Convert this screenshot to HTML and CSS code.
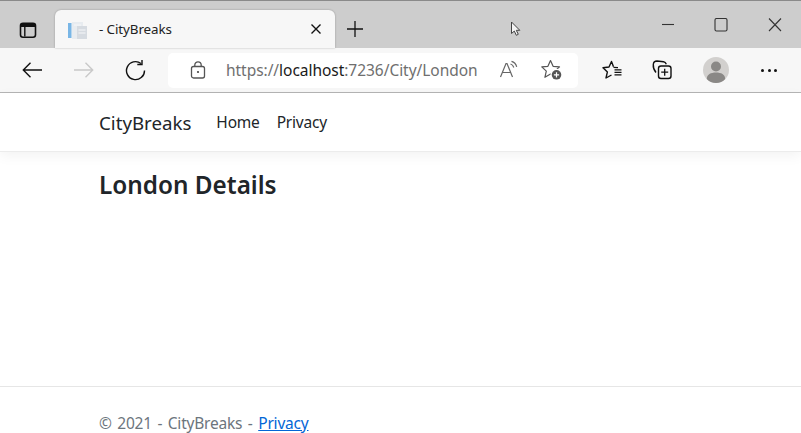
FILE: index.html
```html
<!DOCTYPE html>
<html lang="en">
<head>
<meta charset="utf-8">
<title>- CityBreaks</title>
<link rel="stylesheet" href="styles.css">
</head>
<body>
<header class="chrome">
  <div class="tabstrip">
    <svg class="ic-tabs" width="18" height="18" viewBox="0 0 18 18"><rect x="1.500" y="2.200" width="15" height="14" rx="2.500" fill="none" stroke="#111" stroke-width="1.600"/><path d="M2 3h14v3H2z" fill="#111"/><path d="M5.800 5.500v10" stroke="#111" stroke-width="1.400"/></svg>
    <div class="tab">
      <svg class="favicon" width="20" height="19" viewBox="0 0 20 19"><rect x="0" y="2" width="3.500" height="15" fill="#79b6e6"/><rect x="4" y="1" width="11" height="17" fill="#e8ecf0"/><rect x="9" y="5" width="10" height="13" fill="#d6dbe1"/><path d="M6 4h7M10.500 9h7M10.500 12h7" stroke="#f6f7f9" stroke-width="1"/></svg>
      <span class="tab-title">- CityBreaks</span>
      <svg class="tab-close" width="12" height="12" viewBox="0 0 12 12"><path d="M1.500 1.500l9 9M10.500 1.500l-9 9" stroke="#111" stroke-width="1.400" fill="none"/></svg>
    </div>
    <svg class="ic-new" width="18" height="18" viewBox="0 0 18 18"><path d="M9 1v16M1 9h16" stroke="#111" stroke-width="1.300" fill="none"/></svg>
    <svg class="cursor" width="12" height="16" viewBox="0 0 12 16"><path d="M1.500 1v11.500l2.800-2.400 2 4.200 2-1-2-4h3.500z" fill="#f4f4f4" stroke="#444" stroke-width="1"/></svg>
    <svg class="win win-min" width="14" height="14" viewBox="0 0 14 14"><path d="M1 6.500h12" stroke="#333" stroke-width="1.100"/></svg>
    <svg class="win win-max" width="14" height="14" viewBox="0 0 14 14"><rect x="1" y="0.500" width="12" height="12.500" rx="1.500" fill="none" stroke="#333" stroke-width="1.100"/></svg>
    <svg class="win win-close" width="14" height="14" viewBox="0 0 14 14"><path d="M1 0.500l12 12.500M13 0.500L1 13" stroke="#333" stroke-width="1.100"/></svg>
  </div>
  <div class="toolbar">
    <svg class="tb-back" width="21" height="18" viewBox="0 0 21 18"><path d="M20 9H1.500M8.500 1.800L1.300 9l7.200 7.200" fill="none" stroke="#111" stroke-width="1.400"/></svg>
    <svg class="tb-fwd" width="21" height="18" viewBox="0 0 21 18"><path d="M1 9h18.500M12.500 1.800L19.700 9l-7.200 7.200" fill="none" stroke="#c9c9c9" stroke-width="1.400"/></svg>
    <svg class="tb-reload" width="22" height="22" viewBox="0 0 22 22"><path d="M20.500 11.500A9 9 0 1 1 17 4.500" fill="none" stroke="#111" stroke-width="1.400"/><path d="M18 1v4.500h-4.700" fill="none" stroke="#111" stroke-width="1.400"/></svg>
    <div class="address">
      <svg class="lock" width="16" height="18" viewBox="0 0 16 18"><rect x="1.500" y="5.500" width="13" height="11.500" rx="2" fill="none" stroke="#555" stroke-width="1.300"/><path d="M4.800 5.500V4a3.200 3.200 0 0 1 6.400 0v1.500" fill="none" stroke="#555" stroke-width="1.300"/><circle cx="8" cy="11" r="1.100" fill="#444"/></svg>
      <span class="url">https://<b class="host">localhost</b>:7236/City/London</span>
      <svg class="read" width="20" height="20" viewBox="0 0 20 20"><path d="M1.500 17L7 3.500h1L13.500 17M3.400 12.500h8.200" fill="none" stroke="#666" stroke-width="1.200"/><path d="M11.500 4c1.700.5 2.800 1.700 3.300 3.500M12.500 1.300c2.800.8 4.500 2.700 5.200 5.500" fill="none" stroke="#666" stroke-width="1.200"/></svg>
      <svg class="fav-add" width="22" height="22" viewBox="0 0 22 22"><path d="M9.500 1.500l2.600 5.800 6.400.6-4.800 4.200 1.400 6.200-5.600-3.300-5.600 3.300 1.400-6.200L0.800 7.900l6.100-.6z" fill="none" stroke="#555" stroke-width="1.200" stroke-linejoin="round"/><circle cx="15.500" cy="15.800" r="6" fill="#fff"/><circle cx="15.500" cy="15.800" r="4.800" fill="#555"/><path d="M15.500 13.200v5.200M12.900 15.800h5.200" stroke="#fff" stroke-width="1.200"/></svg>
    </div>
    <svg class="tb-favs" width="22" height="20" viewBox="0 0 22 20"><path d="M11.500 6.800L9.500 1.500 7 7 1 7.800l4.400 4.100L4 18l5.500-3" fill="none" stroke="#111" stroke-width="1.400" stroke-linejoin="round"/><path d="M11.500 7.300l4.500.3M12.500 9.800h7M12.500 12.300h7M12.500 14.800h7" fill="none" stroke="#111" stroke-width="1.200"/></svg>
    <svg class="tb-coll" width="20" height="20" viewBox="0 0 20 20"><path d="M4 12.500C2 10 1 7 1.300 4.500 1.500 2 3 1 5 1l6.500.8c1.500.2 2.300 1 2.800 2.500" fill="none" stroke="#111" stroke-width="1.400"/><rect x="6.500" y="6" width="12.500" height="12.500" rx="2.500" fill="#f7f7f7" stroke="#111" stroke-width="1.400"/><path d="M12.700 8.700v7M9.200 12.200h7" stroke="#111" stroke-width="1.300"/></svg>
    <svg class="tb-avatar" width="26" height="26" viewBox="0 0 26 26"><circle cx="13" cy="13" r="13" fill="#d2d0ce"/><circle cx="13" cy="9.500" r="5" fill="#8a8886"/><path d="M3.800 22c0-4.500 4-6.500 9.200-6.500s9.200 2 9.200 6.500c-2.300 2.500-5.500 4-9.200 4s-6.900-1.500-9.200-4z" fill="#8a8886"/></svg>
    <div class="tb-more"><i></i><i></i><i></i></div>
  </div>
</header>
<nav class="navbar">
  <a class="brand" href="#">CityBreaks</a>
  <a class="nav-link" href="#">Home</a>
  <a class="nav-link" href="#">Privacy</a>
</nav>
<main class="content">
  <h2 class="title">London Details</h2>
</main>
<footer class="footer">
  © 2021 - CityBreaks - <a class="footer-link" href="#">Privacy</a>
</footer>
</body>
</html>
```
FILE: styles.css
```css
* { box-sizing: border-box; }
html, body { margin: 0; height: 433px; overflow: hidden; background: #fff; }
body { display: flex; flex-direction: column; font-family: "Noto Sans", "Open Sans", sans-serif; color: #212529; }

.chrome { flex: none; }
.tabstrip {
  height: 48px;
  background: #cdcdcd;
  border-top: 1px solid #8a8a8a;
  display: flex;
  align-items: center;
  position: relative;
}
.ic-tabs { margin-left: 19px; margin-top: 10px; }
.tab {
  width: 280px;
  height: 38px;
  margin-left: 18px;
  align-self: flex-end;
  background: #f7f7f7;
  border-radius: 6px 6px 0 0;
  display: flex;
  align-items: center;
  padding: 0 13px;
  box-shadow: 0 0 2px rgba(0,0,0,.3);
}
.favicon { flex: none; margin-top: 2px; }
.tab-title { margin-left: 11px; font-size: 13.400px; color: #222; flex: 1; letter-spacing: -0.1px; }
.ic-new { margin: 8px 0 0 11px; }
.cursor { position: absolute; left: 510px; top: 20px; }
.win { position: absolute; top: 17px; }
.win-min { left: 661px; }
.win-max { left: 714px; }
.win-close { left: 768px; }

.toolbar {
  height: 45px;
  background: #f7f7f7;
  border-bottom: 1px solid #b5b5b5;
  display: flex;
  align-items: center;
  padding-left: 22px;
}
.tb-fwd { margin-left: 30px; }
.tb-reload { margin-left: 30px; }
.address {
  width: 410px;
  height: 35px;
  margin-left: 22px;
  background: #fff;
  border-radius: 5px;
  display: flex;
  align-items: center;
  padding-left: 22px;
}
.url { margin-left: 20px; font-size: 15.500px; color: #6f6f6f; letter-spacing: -0.04px; white-space: nowrap; width: 254px; }
.host { font-weight: 400; color: #1a1a1a; }
.read { margin-left: 19px; }
.fav-add { margin-left: 22px; }
.tb-favs { margin-left: 24px; }
.tb-coll { margin-left: 28px; }
.tb-avatar { margin-left: 31px; }
.tb-more { margin-left: 32px; display: flex; gap: 3.500px; }
.tb-more i { width: 3px; height: 3px; border-radius: 50%; background: #111; }

.navbar {
  flex: none;
  height: 59px;
  padding-left: 99px;
  display: flex;
  align-items: center;
  background: #fff;
  border-bottom: 1px solid #ececec;
  box-shadow: 0 4px 12px rgba(0,0,0,.05);
}
.brand { font-size: 18.700px; color: #212529; text-decoration: none; margin-right: 17px; }
.nav-link { font-size: 15.500px; letter-spacing: -0.2px; color: #212529; text-decoration: none; padding: 0 9px 0 8px; }

.content { flex: 1; padding: 18px 0 0 99px; }
.title { margin: 0; font-size: 24.300px; font-weight: 600; line-height: 29px; color: #212529; }

.footer {
  flex: none;
  height: 47px;
  border-top: 1px solid #e6e6e6;
  padding: 24px 0 0 99px;
  font-size: 15.500px;
  letter-spacing: -0.2px;
  word-spacing: 1.700px;
  line-height: 24px;
  color: #6c757d;
}
.footer-link { color: #0366d6; }
```
